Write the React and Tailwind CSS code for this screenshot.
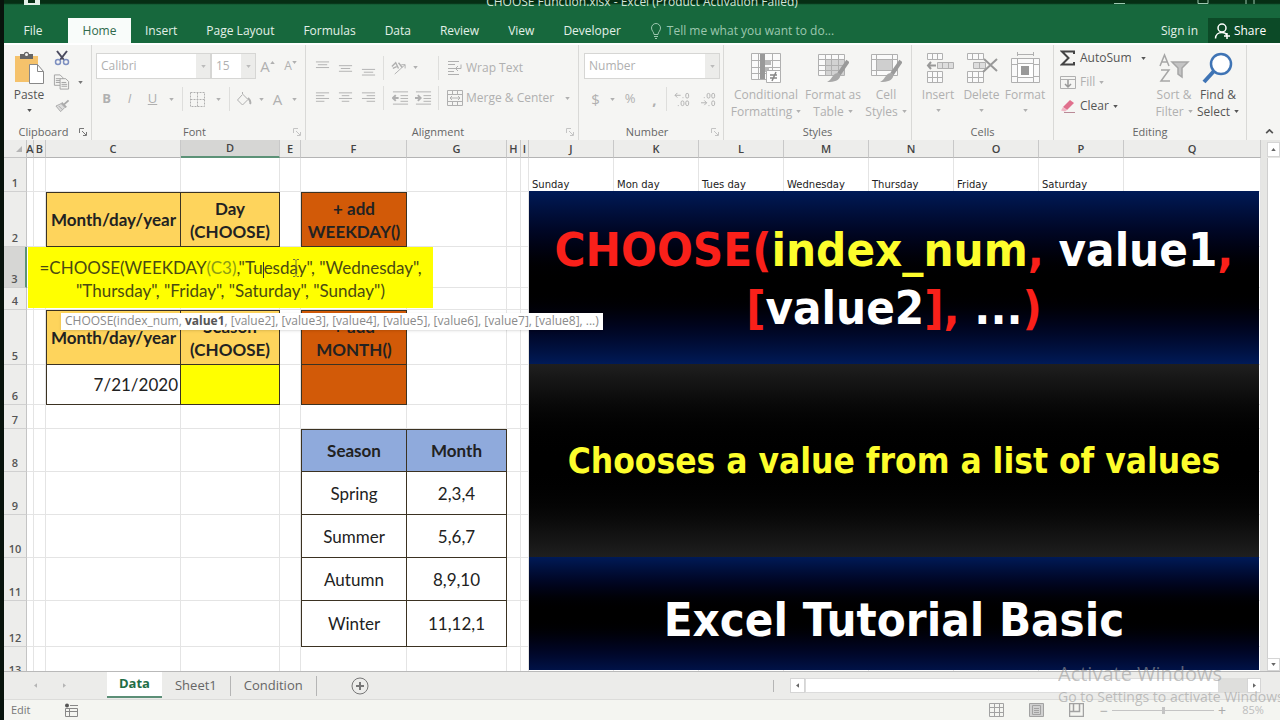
import React, { useState } from "react";
import clsx from "clsx";

const MENU_TABS = ["Insert", "Page Layout", "Formulas", "Data", "Review", "View", "Developer"];

const COLUMNS = [
  { name: "A", width: "w-[7px]" },
  { name: "B", width: "w-[12px]" },
  { name: "C", width: "w-[135px]" },
  { name: "D", width: "w-[99px]" },
  { name: "E", width: "w-[21px]" },
  { name: "F", width: "w-[106px]" },
  { name: "G", width: "w-[100px]" },
  { name: "H", width: "w-[14px]" },
  { name: "I", width: "w-[8px]" },
  { name: "J", width: "w-[85px]" },
  { name: "K", width: "w-[85px]" },
  { name: "L", width: "w-[85px]" },
  { name: "M", width: "w-[85px]" },
  { name: "N", width: "w-[85px]" },
  { name: "O", width: "w-[85px]" },
  { name: "P", width: "w-[85px]" },
  { name: "Q", width: "" },
];

const HEAD = "font-bold text-center bg-[#fed45c]";
const ORANGE = "font-bold text-center bg-[#d25a08]";
const BLUE = "font-bold text-center bg-[#8faadc]";
const PLAIN = "text-center bg-white";

const ROWS = [
  {
    height: "h-[34px]",
    cells: {
      J: { day: "Sunday" },
      K: { day: "Mon day" },
      L: { day: "Tues day" },
      M: { day: "Wednesday" },
      N: { day: "Thursday" },
      O: { day: "Friday" },
      P: { day: "Saturday" },
    },
  },
  {
    height: "h-[55px]",
    cells: {
      C: { lines: ["Month/day/year"], style: HEAD, top: true, left: true },
      D: { lines: ["Day", "(CHOOSE)"], style: HEAD, top: true },
      F: { lines: ["+ add", "WEEKDAY()"], style: ORANGE, top: true, left: true },
    },
  },
  { height: "h-[41px]", cells: {} },
  { height: "h-[22px]", cells: {} },
  {
    height: "h-[55px]",
    cells: {
      C: { lines: ["Month/day/year"], style: HEAD, top: true, left: true },
      D: { lines: ["Season", "(CHOOSE)"], style: HEAD, top: true },
      F: { lines: ["+ add", "MONTH()"], style: ORANGE, top: true, left: true },
    },
  },
  {
    height: "h-[40px]",
    cells: {
      C: { lines: ["7/21/2020"], style: "text-right pr-[2px] bg-white", left: true },
      D: { lines: [], style: "bg-[#ffff00]" },
      F: { lines: [], style: ORANGE, left: true },
    },
  },
  { height: "h-[24px]", cells: {} },
  {
    height: "h-[43px]",
    cells: {
      F: { lines: ["Season"], style: BLUE, top: true, left: true },
      G: { lines: ["Month"], style: BLUE, top: true },
    },
  },
  { height: "h-[43px]", cells: { F: { lines: ["Spring"], style: PLAIN, left: true }, G: { lines: ["2,3,4"], style: PLAIN } } },
  { height: "h-[43px]", cells: { F: { lines: ["Summer"], style: PLAIN, left: true }, G: { lines: ["5,6,7"], style: PLAIN } } },
  { height: "h-[43px]", cells: { F: { lines: ["Autumn"], style: PLAIN, left: true }, G: { lines: ["8,9,10"], style: PLAIN } } },
  { height: "h-[46px]", cells: { F: { lines: ["Winter"], style: PLAIN, left: true }, G: { lines: ["11,12,1"], style: PLAIN } } },
  { height: "h-[32px]", cells: {} },
];

function Caret({ className }) {
  return (
    <svg viewBox="0 0 6 4" className={clsx("w-[5px] h-[3px] shrink-0", className)} fill="currentColor">
      <path d="M0 0h6L3 4z" />
    </svg>
  );
}

function Launcher() {
  return (
    <svg viewBox="0 0 8 8" className="w-2 h-2" fill="none" stroke="currentColor">
      <path d="M.5 5V.5H5M3 3l4 4M7.5 4v3.5H4" />
    </svg>
  );
}

function Divider() {
  return <span className="w-px h-6 bg-[#dededc] shrink-0" />;
}

function Group({ label, launcher, dark, className, children }) {
  return (
    <section aria-label={label} className={clsx("flex flex-col shrink-0 border-r border-[#d9d9d7]", className)}>
      <div className="flex-1 pt-px">{children}</div>
      <div className="flex items-center h-4 px-1 text-[#666] text-[11px]">
        <span className="flex-1 text-center">{label}</span>
        {launcher && (
          <button aria-label={`${label} settings`} className={dark ? "text-[#777]" : "text-[#c4c4c4]"}>
            <Launcher />
          </button>
        )}
      </div>
    </section>
  );
}

function Tool({ label, width = "w-[23px]", className, children }) {
  return (
    <button aria-label={label} className={clsx("flex items-center justify-center h-6 shrink-0", width, className)}>
      {children}
    </button>
  );
}

function BigButton({ icon, lines, caretBelow, className }) {
  return (
    <button className={clsx("flex flex-col items-center shrink-0 text-[12px] leading-[17px]", className)}>
      <span className="flex items-center justify-center h-10 pt-1">{icon}</span>
      <span className="whitespace-nowrap">{lines[0]}</span>
      {caretBelow ? (
        <Caret className="mt-[6px]" />
      ) : (
        <span className="flex items-center gap-1 whitespace-nowrap">
          {lines[1]}
          <Caret />
        </span>
      )}
    </button>
  );
}

function Combo({ label, value, className }) {
  return (
    <div className={clsx("flex h-[26px] border border-[#d6d6d4] bg-white shrink-0", className)}>
      <select
        aria-label={label}
        className="flex-1 min-w-0 appearance-none bg-white pl-1 text-[12px] text-[#b0b0b0] outline-none"
      >
        <option>{value}</option>
      </select>
      <span className="flex items-center justify-center w-[14px] bg-[#ececea] text-[#bbb]">
        <Caret />
      </span>
    </div>
  );
}

function TextLines({ widths, align = "start" }) {
  return (
    <svg viewBox="0 0 16 14" className="w-[15px] h-[14px]" stroke="currentColor">
      {widths.map((w, i) => {
        const x = align === "start" ? 1 : align === "center" ? 8 - w / 2 : 15 - w;
        return <path key={i} d={`M${x} ${1.5 + i * 3}h${w}`} />;
      })}
    </svg>
  );
}

function VerticalAlign({ offset }) {
  return (
    <svg viewBox="0 0 16 20" className="w-[15px] h-5" stroke="currentColor">
      <path d={`M1 ${offset}.5h14M3 ${offset + 3}.5h10M1 ${offset + 6}.5h14`} />
    </svg>
  );
}

function IndentIcon({ flip }) {
  return (
    <svg viewBox="0 0 18 16" className="w-[17px] h-4" fill="none" stroke="currentColor">
      <path d="M1 1.500h16M9 5.500h8M9 8.500h8M9 11.500h8M1 14.500h16" />
      <path strokeWidth="2" d={flip ? "M0 8h6M3 5l3 3-3 3" : "M7 8H1M4 5L1 8l3 3"} />
    </svg>
  );
}

function PasteIcon() {
  return (
    <svg viewBox="0 0 32 34" className="w-8 h-[34px]">
      <rect x="2" y="5" width="23" height="26" fill="#f5c26b" />
      <path d="M7 3h4c0-3 5-3 5 0h4v5H7z" fill="#666" />
      <circle cx="13.500" cy="3.500" r="1.500" fill="#f4f4f2" />
      <path d="M16.500 13.500h8l6 7v12h-14z" fill="#fff" stroke="#888" />
      <path d="M24.500 13.500v7h6" fill="none" stroke="#888" />
    </svg>
  );
}

function ScissorsIcon() {
  return (
    <svg viewBox="0 0 16 16" className="w-4 h-4" fill="none">
      <path d="M3 1l7 9M13 1L6 10" stroke="#4a4a5e" strokeWidth="2" />
      <circle cx="4" cy="12" r="2.500" stroke="#7d8fc0" strokeWidth="1.500" />
      <circle cx="12" cy="12" r="2.500" stroke="#7d8fc0" strokeWidth="1.500" />
    </svg>
  );
}

function CopyIcon() {
  return (
    <svg viewBox="0 0 18 16" className="w-[17px] h-4" fill="#f4f4f2" stroke="#a2a2a2">
      <path d="M1.500.5h6l3 3v8h-9zM3 4.500h5M3 6.500h5M3 8.500h5" />
      <path d="M7.500 4.500h6l3 3v8h-9zM9 8.500h5M9 10.500h6M9 12.500h6" />
    </svg>
  );
}

function BrushIcon() {
  return (
    <svg viewBox="0 0 16 14" className="w-[15px] h-[14px]" fill="none" stroke="#aaa">
      <path d="M14.500 1L10 5M7 3.500l5 5" strokeWidth="2" />
      <path d="M6.500 4.500L1 7l5 6 4.500-4.500zM4 7l4 4" fill="#ddd" />
    </svg>
  );
}

function TableGrid({ children }) {
  return (
    <svg viewBox="0 0 32 32" className="w-8 h-8" fill="none" stroke="#b0b0b0">
      {children}
    </svg>
  );
}

function ConditionalIcon() {
  return (
    <TableGrid>
      <path fill="#fafafa" d="M1.500 1.500h29v26h-29zM1.500 8.500h29M1.500 15.500h29M1.500 21.500h29M8.500 1.500v26M22.500 1.500v26" />
      <path fill="#999" stroke="none" d="M10 2h5v25h-5z" />
      <path fill="#b8b8b8" stroke="none" d="M15 8h6v5h-6zM15 15h4v5h-4z" />
      <path fill="#fff" d="M16.500 18.500h14v12h-14z" />
      <path stroke="#888" strokeWidth="1.500" d="M20 23h7M20 26h7M26 20l-4 9" />
    </TableGrid>
  );
}

function StyleIcon({ small }) {
  return (
    <TableGrid>
      <path fill="#fafafa" d="M1.500 2.500h26v21h-26z" />
      {small ? (
        <>
          <path d="M1.500 7.500h26M1.500 18.500h26M6.500 2.500v21M22.500 2.500v21" />
          <path fill="#cfcfcf" stroke="none" d="M7 8h15v10H7z" />
        </>
      ) : (
        <>
          <path fill="#d2d2d2" stroke="none" d="M8 8h19v15H8z" />
          <path d="M1.500 7.500h26M1.500 13.500h26M1.500 18.500h26M8.500 2.500v21M14.500 2.500v21M21.500 2.500v21" />
        </>
      )}
      <path stroke="#9a9a9a" strokeWidth="4" d="M31 9l-9 13" />
      <path fill="#a8a8a8" stroke="none" d="M21 21c2 0 3 2 2 4-1 3-5 5-13 5 4-2 4-4 6-6 1-2 3-3 5-3z" />
    </TableGrid>
  );
}

function InsertIcon() {
  return (
    <TableGrid>
      <path fill="#fafafa" d="M5.500 1.500h15v6h-15zM5.500 19.500h15v11h-15zM10.500 1.500v6M15.500 1.500v6M10.500 19.500v11M15.500 19.500v11M5.500 25.500h15" />
      <path fill="#ddd" d="M15.500 10.500h16v6h-16zM20.500 10.500v6M26.500 10.500v6" />
      <path stroke="#999" strokeWidth="2" d="M14 13.500H6M9 10l-3 3.500L9 17" />
    </TableGrid>
  );
}

function DeleteIcon() {
  return (
    <TableGrid>
      <path fill="#fafafa" d="M1.500 1.500h16v6h-16zM1.500 19.500h16v11h-16zM6.500 1.500v6M12.500 1.500v6M6.500 19.500v11M12.500 19.500v11M1.500 25.500h16" />
      <path fill="#ddd" d="M7.500 10.500h12v6h-12zM13.500 10.500v6" />
      <path stroke="#999" strokeWidth="2" d="M18 7l13 12M31 7L17 20" />
    </TableGrid>
  );
}

function FormatIcon() {
  return (
    <TableGrid>
      <path fill="#fafafa" d="M2.500 6.500h28v24h-28zM2.500 12.500h28M2.500 24.500h28M8.500 6.500v24M24.500 6.500v24" />
      <path d="M8.500 0v4M24.500 0v4M9 2.500h15" />
      <path fill="#fff" d="M8.500 11.500h16v14h-16z" />
      <path fill="#999" stroke="none" d="M12 14h8v9h-8z" />
    </TableGrid>
  );
}

function SortIcon() {
  return (
    <svg viewBox="0 0 32 32" className="w-8 h-8" fill="none" stroke="#a6a6a6" strokeWidth="1.500">
      <path d="M2 14L6.500 3 11 14M4 10h5M3 18h8L3 29h9" />
      <path fill="#c4c4c4" d="M14 10h16l-6 6v9l-4-3v-6z" />
    </svg>
  );
}

function FindIcon() {
  return (
    <svg viewBox="0 0 32 32" className="w-8 h-8" fill="none" stroke="#3f74b5">
      <circle cx="19" cy="12" r="10" fill="#fff" strokeWidth="2.500" />
      <path d="M12 19L2 30" strokeWidth="4" />
    </svg>
  );
}

function TitleBar() {
  return (
    <div className="flex items-end h-2 shrink-0 overflow-hidden bg-linear-to-b from-[#062e14] from-40% to-[#17683d] to-60% text-[#cfe3d6] text-[12px] leading-3">
      <div className="flex items-start w-[166px] h-2 pl-5">
        <svg viewBox="0 0 16 6" className="w-4 h-[6px]" fill="#e3f0e8">
          <path d="M0 0h16v5H0zM4 0v3h7V0z" fillRule="evenodd" />
        </svg>
      </div>
      <span className="flex-1 text-center whitespace-nowrap">CHOOSE Function.xlsx - Excel (Product Activation Failed)</span>
      <svg viewBox="0 0 150 8" className="w-[150px] h-2 mr-4" fill="none" stroke="#9cc7af">
        <path d="M-3 3.500h14M84 0v3.500h10V0M132 0v4M140 0v4" />
      </svg>
    </div>
  );
}

function MenuBar() {
  return (
    <nav className="flex items-end h-[35px] shrink-0 bg-[#17683d] text-[#e3f0e8] text-[12px]">
      <button className="h-[25px] w-16 pr-[6px]">File</button>
      <button className="h-[25px] w-[63px] bg-[#f9fcfa] text-[#2f6a4b]">Home</button>
      {MENU_TABS.map((tab) => (
        <button key={tab} className="h-[25px] pl-[14px] pr-[15px] whitespace-nowrap">
          {tab}
        </button>
      ))}
      <button className="flex items-center gap-[5px] h-[25px] pl-[14px] text-[#9cc7af] whitespace-nowrap">
        <svg viewBox="0 0 12 16" className="w-3 h-4" fill="none" stroke="currentColor">
          <path d="M4 11.500C4 9 1.500 8 1.500 5a4.500 4.500 0 019 0c0 3-2.500 4-2.500 6.500zM4 13.500h4M5 15.500h2" />
        </svg>
        Tell me what you want to do...
      </button>
      <span className="flex-1" />
      <button className="h-[25px] px-[10px] whitespace-nowrap">Sign in</button>
      <button className="flex items-center justify-center gap-1 h-[25px] w-[72px] pr-2 bg-[#0c4a27] text-white">
        <svg viewBox="0 0 16 16" className="w-4 h-4" fill="none" stroke="currentColor" strokeWidth="1.500">
          <circle cx="8" cy="5" r="4" />
          <path d="M1.500 15.500c0-4 3-6 6.500-6 2 0 4 1 5 2.500M13 10v6M10 13h6" />
        </svg>
        Share
      </button>
    </nav>
  );
}

function Ribbon() {
  return (
    <div className="flex h-[97px] shrink-0 bg-[#f5f5f3] border-t-2 border-white text-[#b0b0b0] overflow-hidden">
      <Group label="Clipboard" launcher dark className="w-[88px]">
        <div className="flex pl-[9px]">
          <BigButton className="w-8 text-[#555]" icon={<PasteIcon />} lines={["Paste"]} caretBelow />
          <div className="flex flex-col pl-2 text-[#777]">
            <Tool label="Cut" width="w-[18px]"><ScissorsIcon /></Tool>
            <Tool label="Copy" width="w-[30px]" className="gap-2"><CopyIcon /><Caret /></Tool>
            <Tool label="Format Painter" width="w-[18px]"><BrushIcon /></Tool>
          </div>
        </div>
      </Group>

      <Group label="Font" launcher className="w-[214px]">
        <div className="flex items-center pl-1 pt-[7px]">
          <Combo label="Font" value="Calibri" className="w-[115px]" />
          <Combo label="Font size" value="15" className="w-[45px]" />
          <Tool label="Increase font size" className="text-[15px]">
            A
            <Caret className="rotate-180 mb-2" />
          </Tool>
          <Tool label="Decrease font size" className="text-[12px]">
            A
            <Caret className="mb-2" />
          </Tool>
        </div>
        <div className="flex items-center pl-[3px] pt-2 text-[13px]">
          <Tool label="Bold" className="font-bold">B</Tool>
          <Tool label="Italic" className="italic">I</Tool>
          <Tool label="Underline" className="underline">U</Tool>
          <Tool label="Underline style" width="w-[14px]"><Caret /></Tool>
          <span className="w-1" />
          <Divider />
          <Tool label="Borders" width="w-[28px]">
            <svg viewBox="0 0 15 15" className="w-[15px] h-[15px]" fill="none" stroke="currentColor">
              <path d="M.5.5h14v14H.5zM7.500.5v14M.5 7.500h14" strokeDasharray="2 1" />
            </svg>
          </Tool>
          <Tool label="Border style" width="w-[14px]"><Caret /></Tool>
          <span className="w-1" />
          <Divider />
          <Tool label="Fill color" width="w-[27px]">
            <svg viewBox="0 0 16 15" className="w-4 h-[15px]" fill="none" stroke="currentColor">
              <path d="M6 3L1.500 8l5 5L12 7.500 6.500 2V0" />
              <path d="M12 6c2 2 3 4 2 6" strokeWidth="2" />
            </svg>
          </Tool>
          <Tool label="Fill palette" width="w-[8px]"><Caret /></Tool>
          <Tool label="Font color" width="w-[25px]" className="text-[15px]">A</Tool>
          <Tool label="Font palette" width="w-[8px]"><Caret /></Tool>
        </div>
      </Group>

      <Group label="Alignment" launcher className="w-[273px]">
        <div className="flex items-center h-10 pt-[3px] pl-[5px]">
          <Tool label="Top align"><VerticalAlign offset={3} /></Tool>
          <Tool label="Middle align"><VerticalAlign offset={7} /></Tool>
          <Tool label="Bottom align"><VerticalAlign offset={11} /></Tool>
          <span className="w-[3px]" />
          <Divider />
          <Tool label="Orientation" width="w-[29px]">
            <svg viewBox="0 0 18 18" className="w-[17px] h-[17px]" fill="none" stroke="currentColor">
              <path d="M5 16L16 6M12 6h4v4" />
              <path d="M2 8l4-4 3 6M3 10l4-2M9 4l4 5" strokeWidth="1.500" />
            </svg>
          </Tool>
          <Caret />
          <span className="w-[20px]" />
          <Divider />
          <button className="flex items-center gap-[3px] h-6 pl-2 text-[12px] whitespace-nowrap">
            <svg viewBox="0 0 16 16" className="w-4 h-4" fill="none" stroke="currentColor">
              <path d="M1 1.500h11M1 4.500h7M1 8.500h13v-4M1 11.500h6M1 14.500h11M11 6L8.500 8.500 11 11" />
            </svg>
            Wrap Text
          </button>
        </div>
        <div className="flex items-center h-6 pl-[5px]">
          <Tool label="Align left"><TextLines widths={[14, 9, 14, 9]} /></Tool>
          <Tool label="Center"><TextLines widths={[14, 8, 14, 8]} align="center" /></Tool>
          <Tool label="Align right"><TextLines widths={[14, 9, 14, 9]} align="end" /></Tool>
          <span className="w-[3px]" />
          <Divider />
          <span className="w-[5px]" />
          <Tool label="Decrease indent"><IndentIcon /></Tool>
          <Tool label="Increase indent"><IndentIcon flip /></Tool>
          <span className="w-[3px]" />
          <Divider />
          <button className="flex items-center gap-[3px] h-6 pl-2 text-[12px] whitespace-nowrap">
            <svg viewBox="0 0 16 16" className="w-4 h-4" fill="none" stroke="currentColor">
              <path d="M.5.5h15v15H.5zM.5 4.500h15M.5 11.500h15M5.500.5v4M10.500.5v4M5.500 11.500v4M10.500 11.500v4M3 8h10M5 6L3 8l2 2M11 6l2 2-2 2" />
            </svg>
            Merge &amp; Center
            <Caret className="ml-2" />
          </button>
        </div>
      </Group>

      <Group label="Number" launcher className="w-[145px]">
        <div className="pl-[5px] pt-[7px]">
          <Combo label="Number format" value="Number" className="w-[136px]" />
        </div>
        <div className="flex items-center pl-[5px] pt-2 text-[15px]">
          <Tool label="Currency">$</Tool>
          <Tool label="Currency format" width="w-[10px]"><Caret /></Tool>
          <Tool label="Percent" width="w-[26px]" className="text-[13px]">%</Tool>
          <Tool label="Comma style" className="font-bold">,</Tool>
          <Divider />
          <Tool label="Increase decimal" width="w-[30px]">
            <svg viewBox="0 0 18 16" className="w-[17px] h-[15px]" fill="none" stroke="currentColor">
              <path d="M7 3.500H1M3.500 1L1 3.500 3.500 6" />
              <rect x="12.500" y="1.500" width="3" height="5" rx="1.500" />
              <rect x="7.500" y="9.500" width="3" height="5" rx="1.500" />
              <rect x="12.500" y="9.500" width="3" height="5" rx="1.500" />
              <path d="M9 6h1M4 14.500h1" />
            </svg>
          </Tool>
          <Tool label="Decrease decimal">
            <svg viewBox="0 0 18 16" className="w-[17px] h-[15px]" fill="none" stroke="currentColor">
              <rect x="7.500" y="1.500" width="3" height="5" rx="1.500" />
              <rect x="12.500" y="1.500" width="3" height="5" rx="1.500" />
              <rect x="12.500" y="9.500" width="3" height="5" rx="1.500" />
              <path d="M1 11.500h6M4.500 9L7 11.500 4.500 14M4 6h1M9 14.500h1" />
            </svg>
          </Tool>
        </div>
      </Group>

      <Group label="Styles" className="w-[188px]">
        <div className="flex pl-[6px]">
          <BigButton className="w-[72px]" icon={<ConditionalIcon />} lines={["Conditional", "Formatting"]} />
          <BigButton className="w-[62px]" icon={<StyleIcon />} lines={["Format as", "Table"]} />
          <BigButton className="w-[44px]" icon={<StyleIcon small />} lines={["Cell", "Styles"]} />
        </div>
      </Group>

      <Group label="Cells" className="w-[142px]">
        <div className="flex pl-1">
          <BigButton className="w-[44px]" icon={<InsertIcon />} lines={["Insert"]} caretBelow />
          <BigButton className="w-[43px]" icon={<DeleteIcon />} lines={["Delete"]} caretBelow />
          <BigButton className="w-[44px]" icon={<FormatIcon />} lines={["Format"]} caretBelow />
        </div>
      </Group>

      <Group label="Editing" className="w-[193px]">
        <div className="flex pl-[6px]">
          <div className="flex flex-col w-[92px] text-[12px]">
            <button className="flex items-center gap-[4px] h-6 text-[#555]">
              <svg viewBox="0 0 16 16" className="w-4 h-4" fill="none" stroke="#444" strokeWidth="2">
                <path d="M14 4V1.500H2L8.500 8 2 14.500h12V12" />
              </svg>
              AutoSum
              <Caret className="ml-[5px]" />
            </button>
            <button className="flex items-center gap-[4px] h-6">
              <svg viewBox="0 0 16 16" className="w-4 h-4" fill="none" stroke="currentColor">
                <path d="M.5 2.500h15v12H.5zM.5 5.500h15" />
                <path d="M8 6v7M5 10l3 3 3-3" strokeWidth="1.500" stroke="#999" />
              </svg>
              Fill
              <Caret />
            </button>
            <button className="flex items-center gap-[4px] h-6 text-[#555]">
              <svg viewBox="0 0 16 16" className="w-4 h-4">
                <path d="M3 9l7-7 4 3-7 7z" fill="#e0708d" />
                <path d="M3 9l4 3-2 1.500-4-1z" fill="#f0b5c4" />
                <path d="M4 14.500h11" stroke="#b98a97" />
              </svg>
              Clear
              <Caret />
            </button>
          </div>
          <BigButton className="w-[44px]" icon={<SortIcon />} lines={["Sort &", "Filter"]} />
          <BigButton className="w-[44px] text-[#555]" icon={<FindIcon />} lines={["Find &", "Select"]} />
        </div>
      </Group>

      <div className="flex flex-1 items-end justify-end p-[6px]">
        <button aria-label="Collapse ribbon" className="text-[#555]">
          <svg viewBox="0 0 10 6" className="w-[9px] h-[5px]" fill="none" stroke="currentColor" strokeWidth="2">
            <path d="M1 5l4-4 4 4" />
          </svg>
        </button>
      </div>
    </div>
  );
}

function Cell({ cell }) {
  if (!cell) return <td className="border-r border-b border-[#e4e4e4] p-0" />;
  if (cell.day) {
    return (
      <td className="border-r border-b border-[#e4e4e4] p-0 pl-[3px] align-bottom text-[10px] leading-[13px] whitespace-nowrap font-['DejaVu_Sans',sans-serif]">
        {cell.day}
      </td>
    );
  }
  return (
    <td
      className={clsx(
        "border-r border-b border-[#3b3222] p-0 align-middle text-[17px] leading-[23px] whitespace-nowrap",
        cell.top && "border-t",
        cell.left && "border-l",
        cell.style
      )}
    >
      {cell.lines.map((line) => (
        <div key={line}>{line}</div>
      ))}
    </td>
  );
}

function Grid() {
  return (
    <table className="w-full table-fixed border-separate border-spacing-0 bg-white text-[#222] font-['Lato',sans-serif]">
      <colgroup>
        <col className="w-[23px]" />
        {COLUMNS.map((c) => (
          <col key={c.name} className={c.width} />
        ))}
      </colgroup>
      <thead>
        <tr className="h-[17px] bg-[#ededeb] text-[11px] leading-4 text-[#444] font-['Open_Sans',sans-serif]">
          <th className="border-r border-b border-[#c4c4c4] p-0">
            <svg viewBox="0 0 8 8" className="w-[6px] h-[6px] ml-auto mr-1" fill="#b5b5b5">
              <path d="M8 0v8H0z" />
            </svg>
          </th>
          {COLUMNS.map((c) => (
            <th
              key={c.name}
              scope="col"
              className={clsx(
                "border-r border-[#c8c8c8] p-0 font-semibold",
                c.name === "D" ? "bg-[#d6d6d4] border-b-2 border-b-[#5c9277]" : "border-b border-b-[#b4b4b4]"
              )}
            >
              <div className="flex justify-center">{c.name}</div>
            </th>
          ))}
        </tr>
      </thead>
      <tbody>
        {ROWS.map((row, i) => (
          <tr key={i} className={row.height}>
            <th
              scope="row"
              className={clsx(
                "border-b border-b-[#d0d0d0] p-0 align-bottom text-[11px] leading-4 font-semibold text-[#555] font-['Open_Sans',sans-serif]",
                i === 2 ? "bg-[#d6d6d4] border-r-2 border-r-[#5c9277]" : "bg-[#ededeb] border-r border-r-[#c4c4c4]"
              )}
            >
              {i + 1}
            </th>
            {COLUMNS.map((c) => (
              <Cell key={c.name} cell={row.cells[c.name]} />
            ))}
          </tr>
        ))}
      </tbody>
    </table>
  );
}

function FormulaEditor() {
  return (
    <div
      role="textbox"
      aria-label="Cell formula"
      className="absolute left-6 top-[107px] w-[405px] h-[61px] pt-[9px] bg-[#ffff00] text-center text-[17px] leading-[23px] text-[#4a4a12] whitespace-nowrap font-['Lato',sans-serif]"
    >
      <div>
        =CHOOSE(WEEKDAY<span className="text-[#8c9c12]">(C3)</span>,"Tu
        <span className="inline-block w-px h-4 align-middle bg-[#333]" />
        esday", "Wednesday",
      </div>
      <div>"Thursday", "Friday", "Saturday", "Sunday")</div>
      {/* mouse pointer */}
      <svg viewBox="0 0 8 18" className="absolute left-[264px] top-3 w-2 h-[18px]" fill="none" stroke="#77773a">
        <path d="M1 .5h2l1 1 1-1h2M4 1.500v15M1 17.500h2l1-1 1 1h2" />
      </svg>
    </div>
  );
}

function FunctionHint() {
  return (
    <div
      role="tooltip"
      className="absolute left-[57px] top-[173px] h-[17px] px-1 bg-white text-[12px] leading-4 text-[#8a8a8a] whitespace-nowrap shadow-sm"
    >
      CHOOSE(index_num, <b className="text-[#555]">value1</b>, [value2], [value3], [value4], [value5], [value6], [value7], [value8], ...)
    </div>
  );
}

function Banner() {
  return (
    <div className="absolute left-[525px] right-[2px] top-[51px] h-[479px] flex flex-col text-center font-bold text-white whitespace-nowrap font-['DejaVu_Sans_Condensed','Noto_Sans',sans-serif]">
      <div className="h-[173px] pt-[30px] bg-linear-to-b from-[#001a57] via-black via-55% to-[#001a57] text-[47px] leading-[58px]">
        <div>
          <span className="text-[#f9201a]">CHOOSE(</span>
          <span className="text-[#fdfd2c]">index_num</span>
          <span className="text-[#f9201a]">,</span> value1<span className="text-[#f9201a]">,</span>
        </div>
        <div>
          <span className="text-[#f9201a]">[</span>value2<span className="text-[#f9201a]">],</span> ...
          <span className="text-[#f9201a]">)</span>
        </div>
      </div>
      <div className="flex items-center justify-center h-[193px] pt-[2px] bg-linear-to-b from-[#1f1f1f] via-black to-[#1f1f1f] text-[35px] text-[#fdfd2c]">
        Chooses a value from a list of values
      </div>
      <div className="flex-1 pt-[34px] bg-linear-to-b from-[#001a57] via-black to-[#001247] text-[47px] leading-[58px]">
        Excel Tutorial Basic
      </div>
    </div>
  );
}

function ScrollButton({ label, rotate, className }) {
  return (
    <button aria-label={label} className={clsx("flex items-center justify-center bg-white border border-[#d5d5d5] text-[#666] shrink-0", className)}>
      <Caret className={rotate} />
    </button>
  );
}

function Sheet() {
  return (
    <div className="flex flex-1 min-h-0 bg-[#e6e6e4] overflow-hidden">
      <div className="relative flex-1 min-w-0">
        <Grid />
        <Banner />
        <FormulaEditor />
        <FunctionHint />
      </div>
      <div className="flex flex-col w-[19px] pl-[6px] pt-[2px]">
        <ScrollButton label="Scroll up" rotate="rotate-180" className="h-[15px]" />
        <div className="flex-1 mt-px bg-white border-l border-[#cfcfcf]" />
        <ScrollButton label="Scroll down" className="h-[13px]" />
      </div>
    </div>
  );
}

function SheetTabs({ active, onSelect }) {
  return (
    <div className="flex h-7 shrink-0 bg-[#ececea] border-t border-[#b9b9b9] text-[13px] text-[#666]">
      <div className="flex items-center justify-center gap-6 w-[103px] pr-3 text-[#b5b5b5]">
        <button aria-label="Previous sheet"><Caret className="rotate-90" /></button>
        <button aria-label="Next sheet"><Caret className="-rotate-90" /></button>
      </div>
      {["Data", "Sheet1", "Condition"].map((name) => (
        <button
          key={name}
          onClick={() => onSelect(name)}
          className={clsx(
            active === name
              ? "h-[26px] px-3 bg-white font-bold text-[#1f6e46] border-b-2 border-[#5c8f77]"
              : "h-5 mt-1 px-[13px] border-r border-[#b5b5b5]"
          )}
        >
          {name}
        </button>
      ))}
      <button aria-label="New sheet" className="ml-[34px]">
        <svg viewBox="0 0 18 18" className="w-[18px] h-[18px]" fill="none" stroke="#777">
          <circle cx="9" cy="9" r="8" />
          <path d="M5 9h8M9 5v8" strokeWidth="2" />
        </svg>
      </button>
      <span className="flex-1" />
      <div className="flex items-center w-[507px] pr-[19px] pb-1 pt-1">
        <span className="w-px h-3 mr-4 bg-[#b5b5b5]" />
        <ScrollButton label="Scroll left" rotate="rotate-90" className="w-[15px] h-[15px]" />
        <div className="w-[414px] h-[15px] bg-white border border-[#dcdcdc]" />
        <div className="flex-1 h-[15px] bg-[#dededc]" />
        <ScrollButton label="Scroll right" rotate="-rotate-90" className="w-[14px] h-[15px]" />
      </div>
    </div>
  );
}

function StatusBar() {
  const [zoom, setZoom] = useState(50);

  return (
    <div className="flex items-center h-[21px] shrink-0 bg-[#f4f5f1] border-t border-[#dcdcda] text-[11px] text-[#777]">
      <span className="pl-[7px] w-[60px]">Edit</span>
      <svg viewBox="0 0 14 14" className="w-[14px] h-[14px]" fill="none" stroke="#888">
        <path d="M1.500 5.500h12v8h-12zM1.500 8.500h12M5.500 5.500v8M6 2.500h8" />
        <circle cx="3" cy="2.500" r="2" fill="#555" stroke="none" />
      </svg>
      <span className="flex-1" />
      <div className="flex gap-[25px] text-[#a2a2a2]">
        <button aria-label="Normal view">
          <svg viewBox="0 0 15 14" className="w-[15px] h-[14px]" fill="none" stroke="currentColor">
            <path d="M.5.5h14v13H.5zM.5 4.500h14M.5 9.500h14M5.500.5v13M10.500.5v13" />
          </svg>
        </button>
        <button aria-label="Page layout view">
          <svg viewBox="0 0 15 14" className="w-[15px] h-[14px]" fill="#d0d0d0" stroke="currentColor">
            <path d="M.5.5h14v13H.5zM3.500 2.500h8v9h-8zM5 5.500h5M5 7.500h5M5 9.500h5" />
          </svg>
        </button>
        <button aria-label="Page break view">
          <svg viewBox="0 0 15 14" className="w-[15px] h-[14px]" fill="none" stroke="currentColor">
            <path d="M.5.5h14v13H.5zM4.500.5v8h6v-8M.5 8.500h4" strokeWidth="1.500" />
          </svg>
        </button>
      </div>
      <div className="flex items-center gap-1 pl-4 text-[14px] text-[#aaa]">
        <button aria-label="Zoom out" className="w-2">−</button>
        <input
          type="range"
          aria-label="Zoom"
          value={zoom}
          onChange={(e) => setZoom(Number(e.target.value))}
          className="w-[102px] h-px appearance-none bg-[#c4c4c4] [&::-webkit-slider-thumb]:appearance-none [&::-webkit-slider-thumb]:w-[3px] [&::-webkit-slider-thumb]:h-[7px] [&::-webkit-slider-thumb]:bg-[#c4c4c4]"
        />
        <button aria-label="Zoom in" className="w-2">+</button>
      </div>
      <span className="w-[54px] text-center text-[#bdbdbd]">85%</span>
    </div>
  );
}

function Watermark() {
  return (
    <div className="absolute right-0 bottom-3 w-[222px] overflow-hidden whitespace-nowrap pointer-events-none text-[#9a9a9a]/60">
      <div className="text-[20px] leading-6">Activate Windows</div>
      <div className="text-[14px] leading-[22px]">Go to Settings to activate Windows.</div>
    </div>
  );
}

export default function App() {
  const [sheet, setSheet] = useState("Data");

  return (
    <div className="relative flex flex-col h-screen overflow-hidden border-l-4 border-[#08130c] font-['Open_Sans',sans-serif]">
      <TitleBar />
      <MenuBar />
      <Ribbon />
      <Sheet />
      <SheetTabs active={sheet} onSelect={setSheet} />
      <StatusBar />
      <Watermark />
    </div>
  );
}
